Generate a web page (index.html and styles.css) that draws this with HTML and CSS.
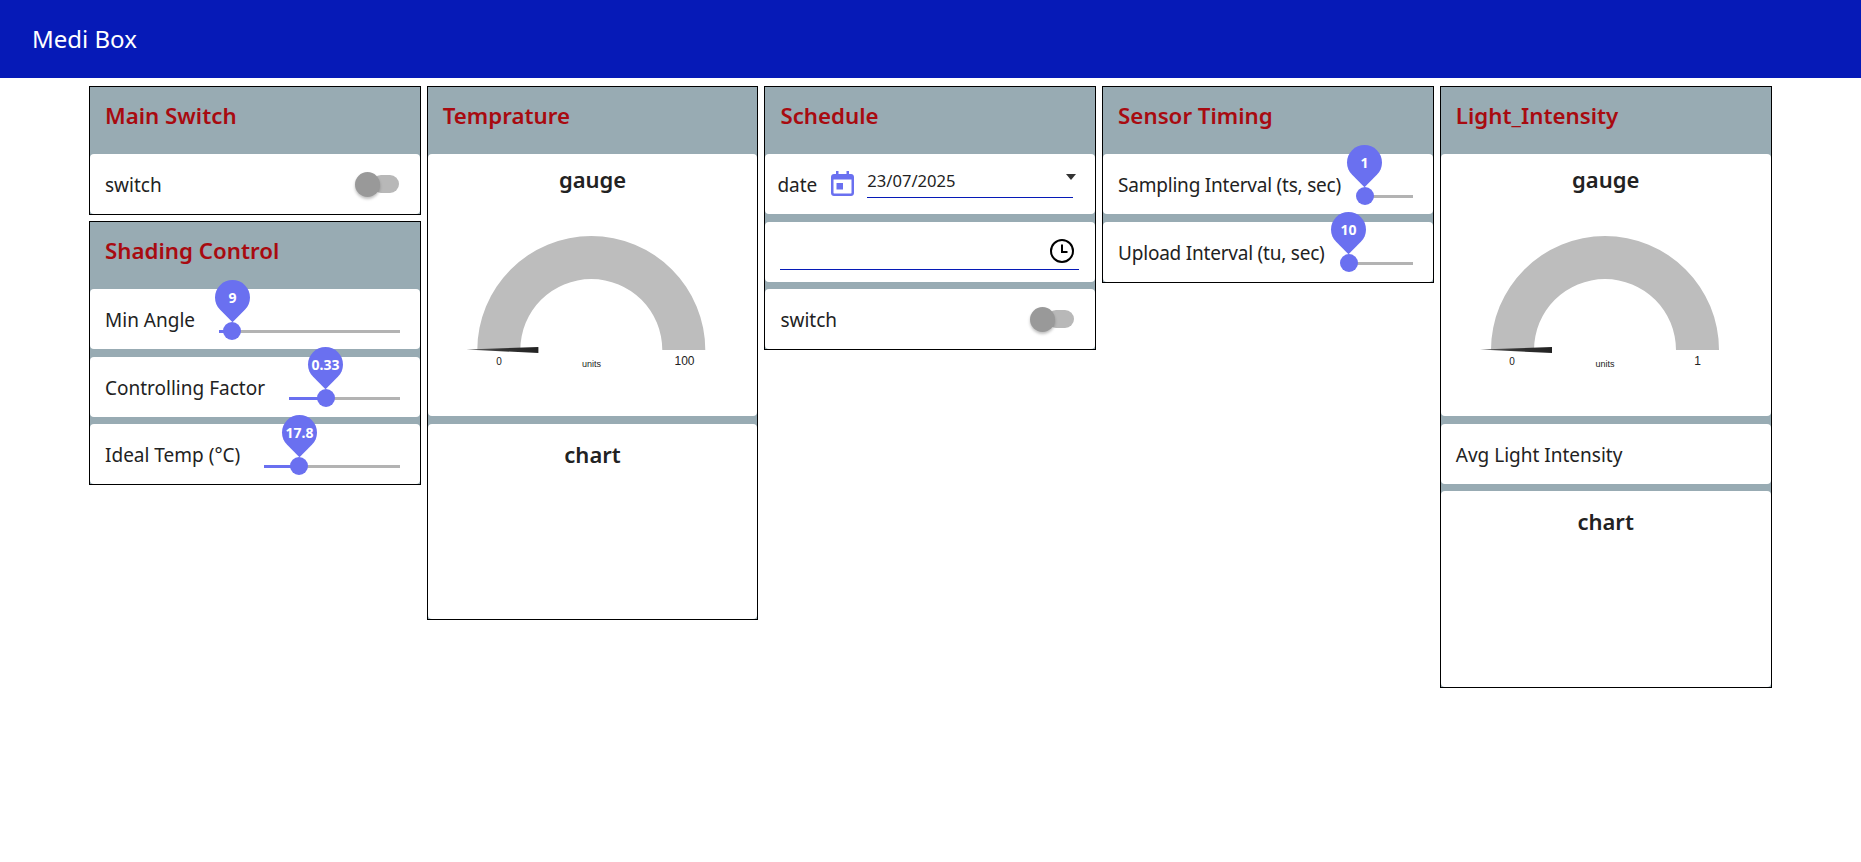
FILE: index.html
```html
<!DOCTYPE html>
<html lang="en">

<head>
    <meta charset="UTF-8">
    <title>Medi Box</title>
    <link rel="stylesheet" href="styles.css">
</head>

<body>
    <header class="topbar">Medi Box</header>
    <main class="board">

        <div class="column">
            <section class="card">
                <h2 class="card-title">Main Switch</h2>
                <div class="widget">
                    <span class="label">switch</span>
                    <span class="switch"><i class="switch-thumb"></i></span>
                </div>
            </section>
            <section class="card">
                <h2 class="card-title">Shading Control</h2>
                <div class="widget">
                    <span class="label">Min Angle</span>
                    <div class="slider">
                        <div class="slider-fill" style="width: 7.2%"></div>
                        <div class="slider-thumb" style="left: 7.2%"><b class="pin"><span>9</span></b></div>
                    </div>
                </div>
                <div class="widget">
                    <span class="label">Controlling Factor</span>
                    <div class="slider">
                        <div class="slider-fill" style="width: 33%"></div>
                        <div class="slider-thumb" style="left: 33%"><b class="pin"><span>0.33</span></b></div>
                    </div>
                </div>
                <div class="widget">
                    <span class="label">Ideal Temp (°C)</span>
                    <div class="slider">
                        <div class="slider-fill" style="width: 26%"></div>
                        <div class="slider-thumb" style="left: 26%"><b class="pin"><span>17.8</span></b></div>
                    </div>
                </div>
            </section>
        </div>

        <div class="column">
            <section class="card">
                <h2 class="card-title">Temprature</h2>
                <div class="widget widget-gauge">
                    <h3 class="widget-title">gauge</h3>
                    <svg class="gauge" viewBox="0 0 329.7 210">
                        <defs>
                            <linearGradient id="needle1" x1="0" x2="1" y1="0" y2="0">
                                <stop offset="0" stop-color="#666" />
                                <stop offset="0.5" stop-color="#333" />
                                <stop offset="1" stop-color="#222" />
                            </linearGradient>
                        </defs>
                        <path d="M49.3 144a114 114 0 0 1 228 0h-43a71 71 0 0 0-142 0z" fill="#bdbdbd" />
                        <path d="M38.4 143.6L110.4 141v6z" fill="url(#needle1)" />
                        <text class="gauge-min" x="71" y="159" text-anchor="middle">0</text>
                        <text class="gauge-units" x="163.5" y="161" text-anchor="middle">units</text>
                        <text class="gauge-max" x="256.5" y="159" text-anchor="middle">100</text>
                    </svg>
                </div>
                <div class="widget widget-chart">
                    <h3 class="widget-title">chart</h3>
                </div>
            </section>
        </div>

        <div class="column">
            <section class="card">
                <h2 class="card-title">Schedule</h2>
                <div class="widget widget-date">
                    <span class="label">date</span>
                    <svg class="date-icon" viewBox="0 0 23 25">
                        <path d="M5 0h2.5v3h8V0H18v3h2c1.700 0 3 1.300 3 3v16c0 1.700-1.300 3-3 3H3c-1.700 0-3-1.300-3-3V6c0-1.700 1.300-3 3-3h2zM2.500 8.500V22c0 .3.200.5.500.5h17c.3 0 .5-.2.500-.5V8.500zM5.500 12h6.500v6.500H5.500z" fill="#6a70f0" fill-rule="evenodd" />
                    </svg>
                    <div class="date-field">
                        <span>23/07/2025</span>
                        <i class="caret"></i>
                    </div>
                </div>
                <div class="widget widget-time">
                    <div class="time-field">
                        <svg class="clock-icon" viewBox="0 0 26 26">
                            <circle cx="13" cy="13" r="11" fill="none" stroke="#000" stroke-width="2" />
                            <path d="M13 6.500V14H18.500" fill="none" stroke="#000" stroke-width="2" />
                        </svg>
                    </div>
                </div>
                <div class="widget">
                    <span class="label">switch</span>
                    <span class="switch"><i class="switch-thumb"></i></span>
                </div>
            </section>
        </div>

        <div class="column">
            <section class="card">
                <h2 class="card-title">Sensor Timing</h2>
                <div class="widget">
                    <span class="label label-tight">Sampling Interval (ts, sec)</span>
                    <div class="slider">
                        <div class="slider-thumb" style="left: 0%"><b class="pin"><span>1</span></b></div>
                    </div>
                </div>
                <div class="widget">
                    <span class="label label-tight">Upload Interval (tu, sec)</span>
                    <div class="slider">
                        <div class="slider-thumb" style="left: 0%"><b class="pin"><span>10</span></b></div>
                    </div>
                </div>
            </section>
        </div>

        <div class="column">
            <section class="card">
                <h2 class="card-title">Light_Intensity</h2>
                <div class="widget widget-gauge">
                    <h3 class="widget-title">gauge</h3>
                    <svg class="gauge" viewBox="0 0 329.7 210">
                        <defs>
                            <linearGradient id="needle2" x1="0" x2="1" y1="0" y2="0">
                                <stop offset="0" stop-color="#666" />
                                <stop offset="0.5" stop-color="#333" />
                                <stop offset="1" stop-color="#222" />
                            </linearGradient>
                        </defs>
                        <path d="M50 144a114 114 0 0 1 228 0h-43a71 71 0 0 0-142 0z" fill="#bdbdbd" />
                        <path d="M39 143.6L111 141v6z" fill="url(#needle2)" />
                        <text class="gauge-min" x="71" y="159" text-anchor="middle">0</text>
                        <text class="gauge-units" x="164" y="161" text-anchor="middle">units</text>
                        <text class="gauge-max" x="256.5" y="159" text-anchor="middle">1</text>
                    </svg>
                </div>
                <div class="widget">
                    <span class="label">Avg Light Intensity</span>
                </div>
                <div class="widget widget-chart widget-chart-tall">
                    <h3 class="widget-title">chart</h3>
                </div>
            </section>
        </div>

    </main>
</body>

</html>
```

FILE: styles.css
```css
body,
h2,
h3 {
    padding: 0;
    margin: 0;
}

body {
    font-family: "Noto Sans", "Open Sans", sans-serif;
    font-size: 19px;
    color: #222;
    background: #fff;
}

.topbar {
    height: 78px;
    line-height: 78px;
    padding-left: 32px;
    font-size: 24px;
    color: #fff;
    background: #061ab7;
}

.board {
    display: grid;
    grid-template-columns: repeat(5, minmax(0, 1fr));
    column-gap: 6px;
    align-items: start;
    padding: 8px 89.5px 0 89px;
}

.column {
    display: flex;
    flex-direction: column;
    gap: 6px;
}

.card {
    display: flex;
    flex-direction: column;
    gap: 7.5px;
    border: 1px solid #000;
    background: #98abb3;
}

.card-title {
    height: 67px;
    margin-bottom: -7.5px;
    padding-left: 15px;
    line-height: 58px;
    font-size: 22.3px;
    font-weight: 600;
    color: #a80a10;
}

.widget {
    display: flex;
    align-items: center;
    height: 60px;
    padding: 0 20px 0 15px;
    background: #fff;
    border-radius: 4px;
}

.label {
    flex: none;
    white-space: nowrap;
    margin-top: 2px;
}

.label-tight {
    letter-spacing: -0.22px;
}

.widget-title {
    height: 52px;
    line-height: 50px;
    text-align: center;
    font-size: 22px;
    font-weight: 600;
}

.widget-gauge,
.widget-chart {
    display: block;
    padding: 0;
}

.widget-gauge {
    height: 262px;
}

.widget-chart {
    height: 195px;
}

.widget-chart .widget-title {
    line-height: 60px;
}

.widget-chart-tall {
    height: 196px;
}

.gauge {
    display: block;
    width: 100%;
    height: 210px;
}

.gauge-min {
    font: 10px "Liberation Sans", sans-serif;
    fill: #222;
}

.gauge-units {
    font: 9px "Liberation Sans", sans-serif;
    fill: #222;
}

.gauge-max {
    font: 12px "Liberation Sans", sans-serif;
    fill: #222;
}

/* switch */
.switch {
    position: relative;
    width: 27px;
    height: 18px;
    margin-left: auto;
    margin-right: 1px;
    border-radius: 9px;
    background: #b8b8b8;
}

.switch-thumb {
    position: absolute;
    left: -17px;
    top: -3px;
    width: 25px;
    height: 25px;
    border-radius: 50%;
    background: #999;
    box-shadow: 0 2px 3px rgba(0, 0, 0, 0.25);
}

/* slider */
.slider {
    position: relative;
    flex: 1;
    height: 3px;
    margin-left: 24px;
    margin-top: 24px;
    background: #b3b3b3;
}

.slider-fill {
    height: 100%;
    background: #6a70f0;
}

.slider-thumb {
    position: absolute;
    top: -8px;
    width: 18px;
    height: 18px;
    margin-left: -9px;
    border-radius: 50%;
    background: #6a70f0;
}

.pin {
    position: absolute;
    left: -8.500px;
    top: -42px;
    width: 35px;
    height: 35px;
    border-radius: 50% 50% 50% 0;
    background: #6a70f0;
    transform: rotate(-45deg);
}

.pin span {
    display: block;
    line-height: 35px;
    text-align: center;
    font-size: 14px;
    font-weight: 700;
    color: #fff;
    transform: rotate(45deg);
}

/* date and time */
.widget-date {
    padding: 0 22px 0 12px;
}

.date-icon {
    flex: none;
    width: 23px;
    height: 25px;
    margin-left: 14px;
    margin-top: -2px;
}

.date-field {
    position: relative;
    flex: 1;
    height: 30px;
    margin-left: 13px;
    margin-top: -4px;
    font-size: 16.6px;
    line-height: 28px;
    border-bottom: 1px solid #061ab7;
}

.caret {
    position: absolute;
    right: -3px;
    top: 7px;
    border-left: 5.500px solid transparent;
    border-right: 5.500px solid transparent;
    border-top: 6px solid #333;
}

.widget-time {
    align-items: flex-start;
    padding: 0 16px 0 15px;
}

.time-field {
    display: flex;
    justify-content: flex-end;
    flex: 1;
    height: 47px;
    border-bottom: 1px solid #061ab7;
}

.clock-icon {
    width: 26px;
    height: 26px;
    margin-top: 16px;
    margin-right: 4px;
}
```
